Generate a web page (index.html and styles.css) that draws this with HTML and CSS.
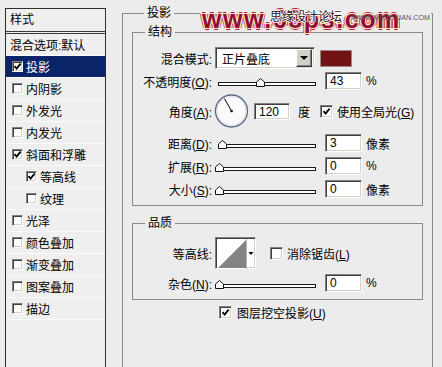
FILE: index.html
```html
<!DOCTYPE html>
<html lang="zh-CN">
<head>
  <meta charset="UTF-8" />
  <title>图层样式 - 投影</title>
  <link rel="stylesheet" href="styles.css">
</head>
<body>
  <div class="dialog">
    <div class="styles-panel">
      <div class="panel-head">样式</div>
      <ul class="style-list">
        <li class="plain">混合选项:默认</li>
        <li class="selected"><span class="check"><svg viewBox="0 0 9 9"><path d="M1.5 4.2 L3.6 6.6 L7.6 1.6" /></svg></span>投影</li>
        <li><span class="check"></span>内阴影</li>
        <li><span class="check"></span>外发光</li>
        <li><span class="check"></span>内发光</li>
        <li><span class="check"><svg viewBox="0 0 9 9"><path d="M1.5 4.2 L3.6 6.6 L7.6 1.6" /></svg></span>斜面和浮雕</li>
        <li class="sub"><span class="check"><svg viewBox="0 0 9 9"><path d="M1.5 4.2 L3.6 6.6 L7.6 1.6" /></svg></span>等高线</li>
        <li class="sub"><span class="check"></span>纹理</li>
        <li><span class="check"></span>光泽</li>
        <li><span class="check"></span>颜色叠加</li>
        <li><span class="check"></span>渐变叠加</li>
        <li><span class="check"></span>图案叠加</li>
        <li><span class="check"></span>描边</li>
      </ul>
    </div>

    <div class="settings">
      <fieldset class="group outer">
        <legend>投影</legend>

        <fieldset class="group">
          <legend>结构</legend>
          <div class="row r-blend">
            <label class="lbl">混合模式:</label>
            <div class="select"><span class="select-text">正片叠底</span><span class="drop"><i></i></span></div>
            <span class="swatch"></span>
          </div>
          <div class="row r-opacity">
            <label class="lbl">不透明度(<u>O</u>):</label>
            <div class="slider"><div class="track"><span class="thumb" style="left: 43%"><svg viewBox="0 0 9 9"><path d="M0.5 8.5 V4 L4.5 0.5 L8.5 4 V8.5 Z" /></svg></span></div></div>
            <span class="num">43</span>
            <span class="unit">%</span>
          </div>
          <div class="row r-angle">
            <label class="lbl">角度(<u>A</u>):</label>
            <svg class="dial" viewBox="0 0 35 34">
              <circle cx="17.5" cy="17" r="16" fill="#fbfbfb" stroke="#5b6782" stroke-width="1.3" />
              <circle cx="17.5" cy="17" r="14.6" fill="none" stroke="#d9dde6" stroke-width="1" />
              <line x1="17.5" y1="17" x2="10.5" y2="4.6" stroke="#000" stroke-width="1" />
              <rect x="16.5" y="16" width="2.2" height="2.2" fill="#000" />
            </svg>
            <span class="num narrow">120</span>
            <span class="unit deg">度</span>
            <span class="check"><svg viewBox="0 0 9 9"><path d="M1.5 4.2 L3.6 6.6 L7.6 1.6" /></svg></span>
            <span class="check-text">使用全局光(<u>G</u>)</span>
          </div>
          <div class="row r-dist">
            <label class="lbl">距离(<u>D</u>):</label>
            <div class="slider"><div class="track"><span class="thumb" style="left: 3%"><svg viewBox="0 0 9 9"><path d="M0.5 8.5 V4 L4.5 0.5 L8.5 4 V8.5 Z" /></svg></span></div></div>
            <span class="num">3</span>
            <span class="unit">像素</span>
          </div>
          <div class="row r-next">
            <label class="lbl">扩展(<u>R</u>):</label>
            <div class="slider"><div class="track"><span class="thumb" style="left: 0%"><svg viewBox="0 0 9 9"><path d="M0.5 8.5 V4 L4.5 0.5 L8.5 4 V8.5 Z" /></svg></span></div></div>
            <span class="num">0</span>
            <span class="unit">%</span>
          </div>
          <div class="row r-next">
            <label class="lbl">大小(<u>S</u>):</label>
            <div class="slider"><div class="track"><span class="thumb" style="left: 0%"><svg viewBox="0 0 9 9"><path d="M0.5 8.5 V4 L4.5 0.5 L8.5 4 V8.5 Z" /></svg></span></div></div>
            <span class="num">0</span>
            <span class="unit">像素</span>
          </div>
        </fieldset>

        <fieldset class="group quality">
          <legend>品质</legend>
          <div class="row r-contour">
            <label class="lbl">等高线:</label>
            <div class="contour">
              <svg viewBox="0 0 39 30">
                <rect x="0" y="0" width="29" height="30" fill="#fff" />
                <polygon points="1,29 29,1 29,29" fill="#848484" />
                <line x1="29.5" y1="0" x2="29.5" y2="30" stroke="#b5b5b5" />
                <polygon points="31.5,13 36.5,13 34,16" fill="#000" />
              </svg>
            </div>
            <span class="check"></span>
            <span class="check-text">消除锯齿(<u>L</u>)</span>
          </div>
          <div class="row r-noise">
            <label class="lbl">杂色(<u>N</u>):</label>
            <div class="slider"><div class="track"><span class="thumb" style="left: 0%"><svg viewBox="0 0 9 9"><path d="M0.5 8.5 V4 L4.5 0.5 L8.5 4 V8.5 Z" /></svg></span></div></div>
            <span class="num">0</span>
            <span class="unit">%</span>
          </div>
        </fieldset>

        <div class="knockout">
          <span class="check"><svg viewBox="0 0 9 9"><path d="M1.5 4.2 L3.6 6.6 L7.6 1.6" /></svg></span>
          <span class="check-text">图层挖空投影(<u>U</u>)</span>
        </div>
      </fieldset>
    </div>
  </div>

  <div class="watermark">
    <span class="wm-big">www.68ps.com</span>
    <span class="wm-cn">思缘设计论坛</span>
    <span class="wm-small">WWW.MISSYUAN.COM</span>
  </div>
</body>
</html>
```

FILE: styles.css
```css
* {
  box-sizing: border-box;
}

body {
  margin: 0;
  width: 442px;
  height: 367px;
  overflow: hidden;
  position: relative;
  background: #ececec;
  font-family: "Liberation Sans", "Noto Sans CJK SC", sans-serif;
  font-size: 12px;
  color: #000;
}

.dialog {
  display: flex;
  align-items: flex-start;
}

/* left style list */
.styles-panel {
  margin: 8px 0 0 5px;
  width: 101px;
  height: 420px;
  border: 1px solid #2e2e2e;
  border-bottom: none;
  background: #efefef;
}

.panel-head {
  height: 25px;
  line-height: 22px;
  padding-left: 4px;
  border-bottom: 3px double #3a3a3a;
}

.style-list {
  list-style: none;
  margin: 0;
  padding: 0;
}

.style-list li {
  display: flex;
  align-items: center;
  height: 22px;
  padding-left: 6px;
  border-bottom: 1px solid #fbfbfb;
}

.style-list li.plain {
  padding-left: 4px;
}

.style-list li.sub {
  padding-left: 20px;
}

.style-list li.selected {
  background: #0a246a;
  color: #fff;
}

.style-list .check {
  width: 11px;
  height: 11px;
  margin-right: 3px;
}

/* checkbox */
.check {
  display: inline-flex;
  align-items: center;
  justify-content: center;
  flex: none;
  width: 13px;
  height: 13px;
  background: #fff;
  border: 1px solid;
  border-color: #808080 #ffffff #ffffff #808080;
  box-shadow: inset 1px 1px 0 #404040, inset -1px -1px 0 #d4d0c8;
}

.check svg {
  width: 9px;
  height: 9px;
}

.check path {
  fill: none;
  stroke: #000;
  stroke-width: 1.8;
}

.check-text {
  margin-left: 4px;
}

/* right side */
.settings {
  margin: 6px 0 0 16px;
  width: 311px;
}

.group {
  margin: 0;
  padding: 0 0 7px 0;
  border: 1px solid #8a8a8a;
}

.group legend {
  margin-left: 12px;
  padding: 0 3px;
  height: 14px;
  line-height: 14px;
}

.outer {
  padding: 5px 9px 80px 9px;
}

.quality {
  margin-top: 10px;
}

.row {
  display: flex;
  align-items: center;
  height: 18px;
}

.lbl {
  width: 79px;
  margin-right: 3px;
  text-align: right;
  white-space: nowrap;
}

.r-blend {
  height: 22px;
  margin-top: 8px;
}

.r-opacity {
  margin-top: 3px;
}

.r-angle {
  height: 34px;
  margin-top: 4px;
}

.r-dist {
  margin-top: 6px;
}

.r-next {
  margin-top: 5px;
}

.r-contour {
  height: 32px;
  margin-top: 7px;
}

.r-noise {
  margin-top: 5px;
}

/* sunken field look */
.select,
.num,
.contour {
  background: #fff;
  border: 1px solid;
  border-color: #808080 #ffffff #ffffff #808080;
  box-shadow: inset 1px 1px 0 #404040, inset -1px -1px 0 #d4d0c8;
}

.select {
  display: flex;
  align-items: center;
  justify-content: space-between;
  width: 100px;
  height: 22px;
  padding: 2px;
}

.select-text {
  padding-left: 4px;
}

.drop {
  display: flex;
  align-items: center;
  justify-content: center;
  width: 16px;
  height: 18px;
  background: #d4d0c8;
  border: 1px solid;
  border-color: #ffffff #404040 #404040 #ffffff;
  box-shadow: inset -1px -1px 0 #808080;
}

.drop i {
  width: 0;
  height: 0;
  border-left: 4px solid transparent;
  border-right: 4px solid transparent;
  border-top: 4px solid #000;
}

.swatch {
  width: 32px;
  height: 17px;
  margin-left: 5px;
  background: #741313;
  border: 1px solid #9a8a8a;
}

.slider {
  width: 105px;
  height: 18px;
  padding: 10px 4px 0 3px;
}

.track {
  position: relative;
  height: 4px;
  background: #fff;
  border: 1px solid #1a1a1a;
}

.thumb {
  position: absolute;
  bottom: -2px;
  width: 9px;
  height: 9px;
  margin-left: -4px;
}

.thumb svg {
  display: block;
  width: 9px;
  height: 9px;
}

.thumb path {
  fill: #fff;
  stroke: #111;
  stroke-width: 1;
}

.num {
  width: 37px;
  height: 18px;
  margin-left: 5px;
  padding: 1px 0 0 4px;
  line-height: 15px;
}

.num.narrow {
  width: 36px;
  height: 17px;
}

.unit {
  margin-left: 4px;
}

.unit.deg {
  margin-left: 8px;
  margin-right: 10px;
}

.dial {
  width: 35px;
  height: 34px;
  margin-left: -1px;
}

.contour {
  width: 41px;
  height: 32px;
  padding: 1px;
  margin-right: 14px;
}

.contour svg {
  display: block;
  width: 39px;
  height: 30px;
}

.knockout {
  display: flex;
  align-items: center;
  height: 14px;
  margin-top: 5px;
  padding-left: 87px;
}

.knockout .check-text {
  margin-left: 5px;
}

/* watermark laid over the dialog */
.watermark {
  position: absolute;
  top: 8px;
  left: 200px;
  width: 231px;
  height: 13px;
  background: #ececec;
}

.wm-big {
  position: absolute;
  left: 2px;
  top: -2px;
  font-family: "Liberation Sans", sans-serif;
  font-weight: bold;
  font-size: 25px;
  line-height: 26px;
  letter-spacing: 1.6px;
  color: #8e0b3b;
  text-shadow: 1px 0 #f8e4b8, -1px 0 #f8e4b8, 0 1px #f8e4b8, 0 -1px #f8e4b8,
    1px 1px #f8e4b8, -1px -1px #f8e4b8, 1px -1px #f8e4b8, -1px 1px #f8e4b8,
    2px 0 #b8164f, -2px 0 #b8164f, 0 2px #b8164f, 0 -2px #b8164f;
}

.wm-cn {
  position: absolute;
  left: 70px;
  top: 1px;
  font-family: "Noto Sans CJK SC", sans-serif;
  font-size: 12px;
  line-height: 13px;
  color: #2a1010;
  text-shadow: 1px 0 #fff, -1px 0 #fff, 0 1px #fff, 0 -1px #fff;
}

.wm-small {
  position: absolute;
  right: 1px;
  top: 5px;
  font-size: 8px;
  line-height: 9px;
  color: #5a5a5a;
  transform: scaleX(0.9);
  transform-origin: right center;
}
```
